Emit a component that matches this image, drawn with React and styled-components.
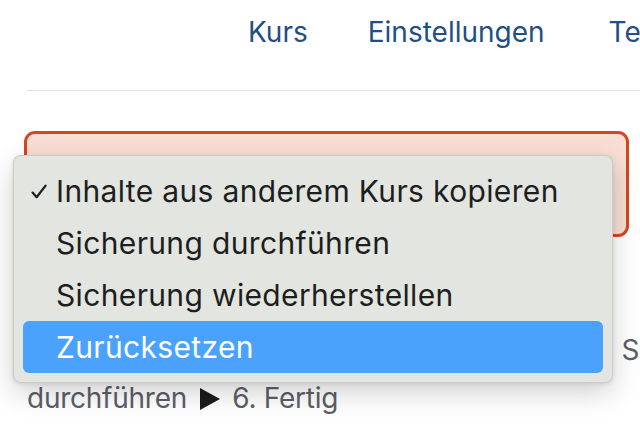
import React from "react";
import styled, { createGlobalStyle } from "styled-components";

const GlobalStyle = createGlobalStyle`
  body {
    margin: 0;
    background: #fff;
    font-family: Inter, "Liberation Sans", sans-serif;
  }
`;

const navItems = ["Kurs", "Einstellungen", "Teilnehmer/innen", "Bewertungen"];

const menuItems = [
  { label: "Inhalte aus anderem Kurs kopieren", checked: true },
  { label: "Sicherung durchführen" },
  { label: "Sicherung wiederherstellen" },
  { label: "Zurücksetzen", active: true },
];

function Arrow() {
  return (
    <ArrowIcon width="20" height="22" viewBox="0 0 20 22">
      <polygon points="0,0 20,11 0,22" fill="#1b1b1b" />
    </ArrowIcon>
  );
}

function Check() {
  return (
    <svg width="16" height="15" viewBox="0 0 16 15">
      <polyline
        points="1.6,8.6 5.6,13.2 14.6,1.6"
        fill="none"
        stroke="#1f1f1f"
        strokeWidth="2.3"
        strokeLinecap="round"
        strokeLinejoin="round"
      />
    </svg>
  );
}

export default function App() {
  return (
    <>
      <GlobalStyle />
      <Page>
        <Header>
          {navItems.map((item) => (
            <NavLink key={item}>{item}</NavLink>
          ))}
        </Header>
        <Divider />
        <Alert />
        <Steps>
          <StepLine>
            1. Kurs wählen <Arrow /> 2. Grundeinstellungen <Arrow /> 3. Schema-Einstellungen
          </StepLine>
          <StepLine>
            durchführen <Arrow /> 6. Fertig
          </StepLine>
        </Steps>

        <Menu>
          {menuItems.map((item) => (
            <MenuItem key={item.label} $active={item.active}>
              <CheckSlot>{item.checked && <Check />}</CheckSlot>
              {item.label}
            </MenuItem>
          ))}
        </Menu>
      </Page>
    </>
  );
}

const Page = styled.div`
  position: relative;
  width: 640px;
  height: 430px;
  overflow: hidden;
`;

const Header = styled.nav`
  display: flex;
  height: 90px;
  box-sizing: border-box;
  padding: 15px 0 0 216px;
  white-space: nowrap;
`;

const NavLink = styled.a`
  padding: 0 32px;
  font-size: 28px;
  line-height: 34px;
  color: #1f4f86;
  text-decoration: none;
  &:nth-child(2) {
    margin-left: -4px;
  }
`;

const Divider = styled.hr`
  margin: 0 0 0 27px;
  border: 0;
  height: 1px;
  background: #dee2e6;
`;

const Alert = styled.div`
  box-sizing: border-box;
  margin: 40px 11px 0 24px;
  height: 106px;
  border: 3px solid #d4471f;
  border-radius: 11px;
  background: #f8ded4;
`;

const Steps = styled.div`
  margin: 89px 0 0 27px;
  font-size: 28px;
  letter-spacing: -0.25px;
  line-height: 48px;
  color: #5c5f67;
`;

const StepLine = styled.div`
  white-space: nowrap;
`;

const ArrowIcon = styled.svg`
  margin: 0 5px;
  vertical-align: -2px;
`;

const Menu = styled.div`
  position: absolute;
  left: 13px;
  top: 155px;
  width: 600px;
  box-sizing: border-box;
  padding: 9px;
  border-radius: 8px;
  background: #e2e5e0;
  border: 1px solid rgba(0, 0, 0, 0.1);
  box-shadow: 0 10px 28px rgba(0, 0, 0, 0.18), 0 1px 4px rgba(0, 0, 0, 0.1);
`;

const MenuItem = styled.div`
  display: flex;
  align-items: center;
  height: 52px;
  border-radius: 6px;
  font-size: 30px;
  letter-spacing: 0.35px;
  color: ${(p) => (p.$active ? "#fff" : "#1e1e1e")};
  background: ${(p) => (p.$active ? "#4aa2fc" : "transparent")};
`;

const CheckSlot = styled.span`
  display: flex;
  width: 33px;
  box-sizing: border-box;
  padding-left: 8px;
`;
